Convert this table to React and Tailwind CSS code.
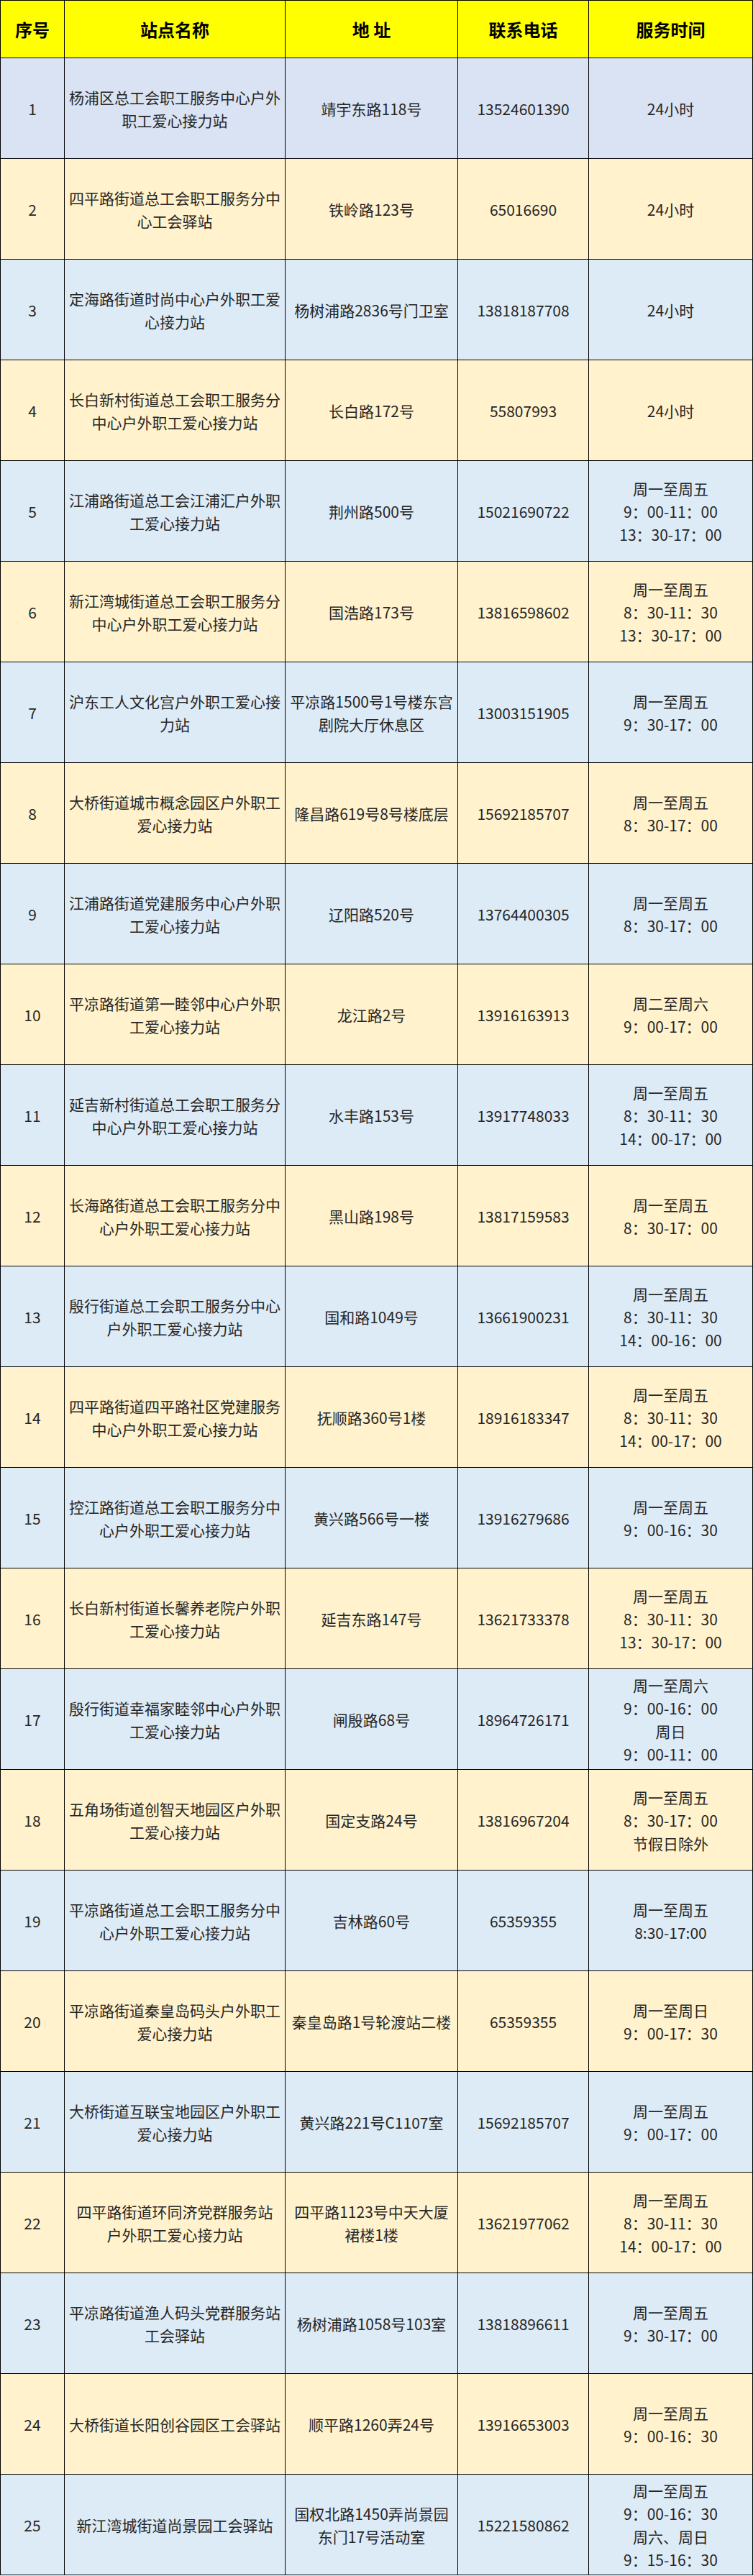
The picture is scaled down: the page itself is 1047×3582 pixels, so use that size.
import React from "react";

const stations = [
  { name: ["杨浦区总工会职工服务中心户外", "职工爱心接力站"], addr: ["靖宇东路118号"], tel: "13524601390", hours: ["24小时"] },
  { name: ["四平路街道总工会职工服务分中", "心工会驿站"], addr: ["铁岭路123号"], tel: "65016690", hours: ["24小时"] },
  { name: ["定海路街道时尚中心户外职工爱", "心接力站"], addr: ["杨树浦路2836号门卫室"], tel: "13818187708", hours: ["24小时"] },
  { name: ["长白新村街道总工会职工服务分", "中心户外职工爱心接力站"], addr: ["长白路172号"], tel: "55807993", hours: ["24小时"] },
  { name: ["江浦路街道总工会江浦汇户外职", "工爱心接力站"], addr: ["荆州路500号"], tel: "15021690722", hours: ["周一至周五", "9：00-11：00", "13：30-17：00"] },
  { name: ["新江湾城街道总工会职工服务分", "中心户外职工爱心接力站"], addr: ["国浩路173号"], tel: "13816598602", hours: ["周一至周五", "8：30-11：30", "13：30-17：00"] },
  { name: ["沪东工人文化宫户外职工爱心接", "力站"], addr: ["平凉路1500号1号楼东宫", "剧院大厅休息区"], tel: "13003151905", hours: ["周一至周五", "9：30-17：00"] },
  { name: ["大桥街道城市概念园区户外职工", "爱心接力站"], addr: ["隆昌路619号8号楼底层"], tel: "15692185707", hours: ["周一至周五", "8：30-17：00"] },
  { name: ["江浦路街道党建服务中心户外职", "工爱心接力站"], addr: ["辽阳路520号"], tel: "13764400305", hours: ["周一至周五", "8：30-17：00"] },
  { name: ["平凉路街道第一睦邻中心户外职", "工爱心接力站"], addr: ["龙江路2号"], tel: "13916163913", hours: ["周二至周六", "9：00-17：00"] },
  { name: ["延吉新村街道总工会职工服务分", "中心户外职工爱心接力站"], addr: ["水丰路153号"], tel: "13917748033", hours: ["周一至周五", "8：30-11：30", "14：00-17：00"] },
  { name: ["长海路街道总工会职工服务分中", "心户外职工爱心接力站"], addr: ["黑山路198号"], tel: "13817159583", hours: ["周一至周五", "8：30-17：00"] },
  { name: ["殷行街道总工会职工服务分中心", "户外职工爱心接力站"], addr: ["国和路1049号"], tel: "13661900231", hours: ["周一至周五", "8：30-11：30", "14：00-16：00"] },
  { name: ["四平路街道四平路社区党建服务", "中心户外职工爱心接力站"], addr: ["抚顺路360号1楼"], tel: "18916183347", hours: ["周一至周五", "8：30-11：30", "14：00-17：00"] },
  { name: ["控江路街道总工会职工服务分中", "心户外职工爱心接力站"], addr: ["黄兴路566号一楼"], tel: "13916279686", hours: ["周一至周五", "9：00-16：30"] },
  { name: ["长白新村街道长馨养老院户外职", "工爱心接力站"], addr: ["延吉东路147号"], tel: "13621733378", hours: ["周一至周五", "8：30-11：30", "13：30-17：00"] },
  { name: ["殷行街道幸福家睦邻中心户外职", "工爱心接力站"], addr: ["闸殷路68号"], tel: "18964726171", hours: ["周一至周六", "9：00-16：00", "周日", "9：00-11：00"] },
  { name: ["五角场街道创智天地园区户外职", "工爱心接力站"], addr: ["国定支路24号"], tel: "13816967204", hours: ["周一至周五", "8：30-17：00", "节假日除外"] },
  { name: ["平凉路街道总工会职工服务分中", "心户外职工爱心接力站"], addr: ["吉林路60号"], tel: "65359355", hours: ["周一至周五", "8:30-17:00"] },
  { name: ["平凉路街道秦皇岛码头户外职工", "爱心接力站"], addr: ["秦皇岛路1号轮渡站二楼"], tel: "65359355", hours: ["周一至周日", "9：00-17：30"] },
  { name: ["大桥街道互联宝地园区户外职工", "爱心接力站"], addr: ["黄兴路221号C1107室"], tel: "15692185707", hours: ["周一至周五", "9：00-17：00"] },
  { name: ["四平路街道环同济党群服务站", "户外职工爱心接力站"], addr: ["四平路1123号中天大厦", "裙楼1楼"], tel: "13621977062", hours: ["周一至周五", "8：30-11：30", "14：00-17：00"] },
  { name: ["平凉路街道渔人码头党群服务站", "工会驿站"], addr: ["杨树浦路1058号103室"], tel: "13818896611", hours: ["周一至周五", "9：30-17：00"] },
  { name: ["大桥街道长阳创谷园区工会驿站"], addr: ["顺平路1260弄24号"], tel: "13916653003", hours: ["周一至周五", "9：00-16：30"] },
  { name: ["新江湾城街道尚景园工会驿站"], addr: ["国权北路1450弄尚景园", "东门17号活动室"], tel: "15221580862", hours: ["周一至周五", "9：00-16：30", "周六、周日", "9：15-16：30"] },
];

const headers = ["序号", "站点名称", "地 址", "联系电话", "服务时间"];

function Cell({ lines, bg }) {
  return (
    <div className={`flex h-[140px] flex-col items-center justify-center border-b border-r border-black text-center ${bg}`}>
      {lines.map((line, i) => (
        <div key={i} className="whitespace-nowrap leading-[32px]">
          {line}
        </div>
      ))}
    </div>
  );
}

export default function App() {
  return (
    <div className="min-h-screen bg-white">
      <div
        className="grid w-[1047px] grid-cols-[89px_307px_240px_182px_228px] border-l border-t border-black text-[21px] text-[#262626]"
        style={{ fontFamily: '"Noto Sans CJK SC", "Noto Sans", sans-serif' }}
      >
        {headers.map((h) => (
          <div
            key={h}
            className="flex h-[80px] items-center justify-center whitespace-pre border-b border-r border-black bg-[#ffff00] text-[24px] font-bold text-black"
          >
            {h}
          </div>
        ))}

        {stations.map((s, idx) => {
          const bg = idx === 0 ? "bg-[#dae3f3]" : idx % 2 === 0 ? "bg-[#ddebf7]" : "bg-[#fff2cc]";
          return (
            <React.Fragment key={idx}>
              <Cell lines={[String(idx + 1)]} bg={bg} />
              <Cell lines={s.name} bg={bg} />
              <Cell lines={s.addr} bg={bg} />
              <Cell lines={[s.tel]} bg={bg} />
              <Cell lines={s.hours} bg={bg} />
            </React.Fragment>
          );
        })}
      </div>
    </div>
  );
}
